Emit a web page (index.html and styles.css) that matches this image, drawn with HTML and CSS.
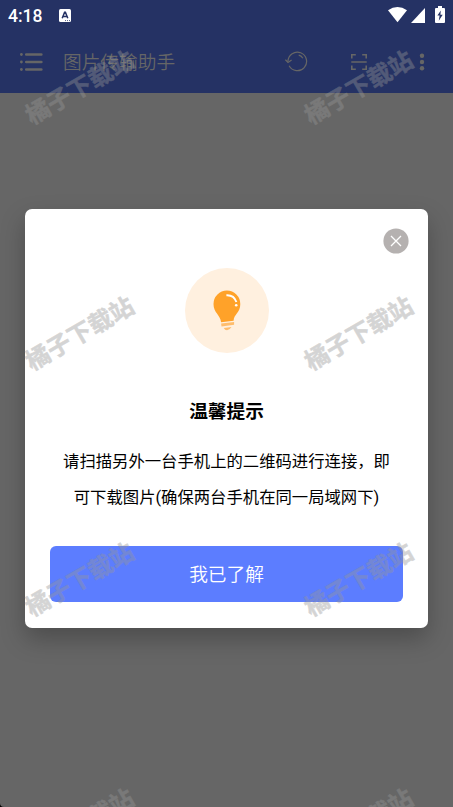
FILE: index.html
```html
<!DOCTYPE html>
<html lang="zh-CN">
<head>
<meta charset="utf-8">
<title>图片传输助手</title>
<link rel="stylesheet" href="styles.css">
</head>
<body>
<div class="screen">
  <header class="top">
    <div class="status">
      <span class="clock">4:18</span>
      <svg class="input-icon" width="12" height="13" viewBox="0 0 12 13"><rect width="12" height="13" rx="1.5" fill="#fff"/><path d="M3.2 9.3L5.6 3.2h.8l2.400 6.100M4.200 7.500h3.600" fill="none" stroke="#253264" stroke-width="1.500"/><path d="M6 11.600h5" stroke="#253264" stroke-width=".8" stroke-dasharray="1 1"/></svg>
      <span class="grow"></span>
      <svg class="wifi" width="19" height="16" viewBox="0 0 19 16"><path d="M0 3.300Q9.500-3.200 19 3.300L9.500 15.300z" fill="#fff"/></svg>
      <svg class="signal" width="14" height="15" viewBox="0 0 14 15"><path d="M14 0v15H0z" fill="#fff"/></svg>
      <svg class="battery" width="10" height="17" viewBox="0 0 10 17"><path d="M3 0h4v2h2q1 0 1 1v13q0 1-1 1H1q-1 0-1-1V3q0-1 1-1h2z" fill="#fff"/><path d="M5.800 4.500L2.400 9.600h2.200L3.800 14.700 7.700 8.700H5.400z" fill="#253264"/></svg>
    </div>
    <div class="toolbar">
      <svg class="menu" width="24" height="20" viewBox="0 0 24 20"><path d="M6.300 2.500h15M6.300 10h15M6.300 17.500h15" stroke="#666" stroke-width="2.700" stroke-linecap="round"/><g fill="#666"><circle cx="1.400" cy="2.500" r="1.400"/><circle cx="1.400" cy="10" r="1.400"/><circle cx="1.400" cy="17.500" r="1.400"/></g></svg>
      <h1 class="title">图片传输助手</h1>
      <span class="grow"></span>
      <svg class="refresh" width="24" height="22" viewBox="0 0 24 22" fill="none" stroke="#666" stroke-width="1.200"><path d="M3 10.200A9.300 9.300 0 1 1 4.100 14.800M.4 8.700L3 11.500l3.600-2.500"/><path d="M13.700 4.200q2.600.5 4.200 3"/></svg>
      <svg class="scan" width="16" height="16" viewBox="0 0 16 16" fill="none" stroke="#666" stroke-width="1.600"><path d="M.8 4.500V.8h4M11.200.8h4v3.700M15.200 11.500v3.700h-4M4.800 15.200h-4v-3.700M.3 8h15.400"/></svg>
      <svg class="more" width="6" height="18" viewBox="0 0 6 18" fill="#666"><circle cx="3" cy="2.800" r="2.200"/><circle cx="3" cy="9" r="2.200"/><circle cx="3" cy="15.200" r="2.200"/></svg>
    </div>
  </header>
  <main class="content">
    <section class="dialog">
      <svg class="close" width="26" height="26" viewBox="0 0 26 26"><circle cx="13" cy="13" r="12.600" fill="#b5b1b0"/><path d="M8 8l10 10M18 8L8 18" stroke="#fff" stroke-width="1.300"/></svg>
      <svg class="bulb" width="84" height="85" viewBox="0 0 84 85"><ellipse cx="42" cy="42.500" rx="42" ry="42.400" fill="#fff0df"/><path d="M36.100 54.200C35.300 46.700 28.500 44.800 28.500 36a13.400 13.400 0 0 1 26.800 0C55.300 44.800 48.800 46.200 48.600 52.700Z" fill="#ffa229"/><path d="M41.400 27.200Q49 26.800 51.400 34" fill="none" stroke="#fff" stroke-width="1.900"/><circle cx="51.200" cy="37.300" r="1.300" fill="#fff"/><path d="M36.100 55.600L49.100 54v2.800L36.500 58.500zM38.800 60L46.500 58.900Q44.500 62.200 42 62.200 39.800 62.200 38.800 60z" fill="#ffbd6c"/></svg>
      <h2 class="heading">温馨提示</h2>
      <p class="message">请扫描另外一台手机上的二维码进行连接，即<br>可下载图片(确保两台手机在同一局域网下)</p>
      <button class="confirm">我已了解</button>
    </section>
  </main>
  <div class="watermarks">
    <span>橘子下载站</span><span>橘子下载站</span>
    <span>橘子下载站</span><span>橘子下载站</span>
    <span>橘子下载站</span><span>橘子下载站</span>
    <span>橘子下载站</span><span>橘子下载站</span>
  </div>
</div>
</body>
</html>
```
FILE: styles.css
```css
* { box-sizing: border-box; }
html { background: #000; }
body { margin: 0; }
.screen {
  position: relative;
  display: flex;
  flex-direction: column;
  width: 453px;
  height: 807px;
  overflow: hidden;
  border-bottom-left-radius: 4px;
  background: #666;
  font-family: Roboto, "Noto Sans CJK SC", sans-serif;
}
.top { height: 93px; background: #253264; }
.grow { flex: 1; }
.status { display: flex; align-items: center; height: 31px; padding: 0 8px; }
.clock { width: 51px; padding-top: 1px; color: #fff; font-size: 17.5px; font-weight: 500; line-height: 31px; }
.wifi { margin: -2px 4px 0 0; }
.signal { margin-right: 10px; }
.battery { margin-top: -2px; }
.toolbar { display: flex; align-items: center; height: 62px; padding: 0 28.5px 0 20px; }
.title { margin: 2px 0 0 19px; color: #666; font-size: 18.7px; font-weight: 350; line-height: 30px; }
.refresh { margin-right: 42px; }
.scan { margin-right: 52px; }
.content { padding: 116px 25px 0; }
.dialog {
  display: flex;
  flex-direction: column;
  height: 418.5px;
  padding: 19px 19px 25.5px 25px;
  border-radius: 7px;
  background: #fff;
  box-shadow: 0 11px 25px rgba(0, 0, 0, .25);
}
.close { align-self: flex-end; }
.bulb { margin: 14px 0 0 135px; }
.heading {
  margin: 44px 6px 0 0;
  color: #000;
  font-size: 18.7px;
  font-weight: 700;
  line-height: 30px;
  text-align: center;
}
.message {
  margin: 17px 6px 0 0;
  color: #000;
  font-size: 16.35px;
  line-height: 36px;
  text-align: center;
  white-space: nowrap;
}
.confirm {
  width: 353px;
  height: 56.5px;
  margin-top: auto;
  padding: 2px 0 0;
  border: 0;
  border-radius: 6px;
  background: #5c7dff;
  color: #fff;
  font: 350 18.7px/54px Roboto, "Noto Sans CJK SC", sans-serif;
}
.watermarks {
  position: absolute;
  inset: 70px 0 auto 20px;
  display: grid;
  grid-template-columns: 120px 120px;
  grid-auto-rows: 36px;
  gap: 210px 159px;
  color: #969696;
  opacity: .4;
  font-size: 24px;
  font-weight: 700;
  line-height: 36px;
  white-space: nowrap;
  -webkit-text-stroke: .5px #969696;
  pointer-events: none;
}
.watermarks span { transform: rotate(-30deg); }
```
